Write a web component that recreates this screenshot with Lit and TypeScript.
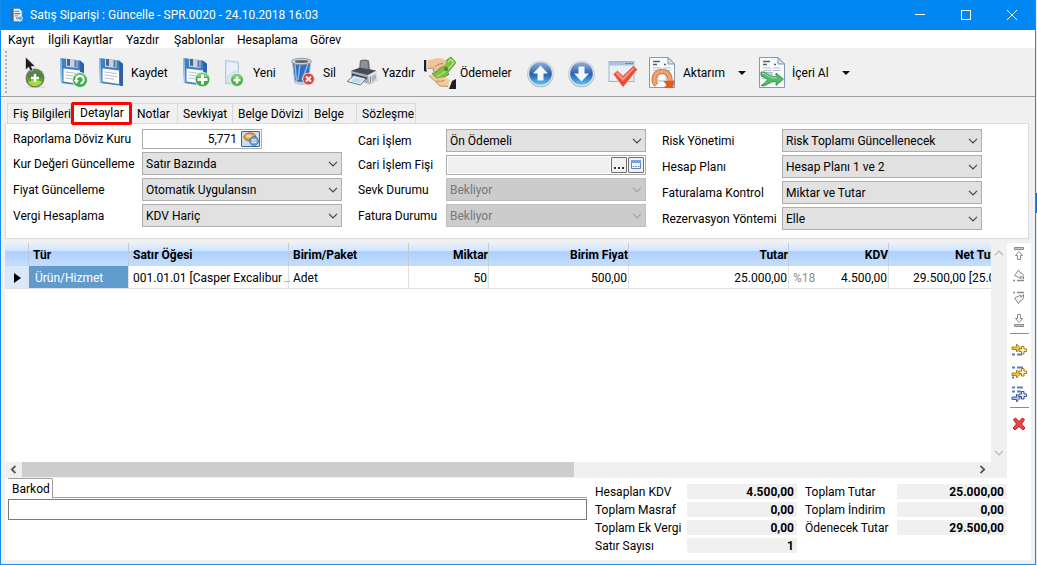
import { LitElement, html, css, svg, nothing } from "lit";
import { customElement, property } from "lit/decorators.js";
import { classMap } from "lit/directives/class-map.js";
import { styleMap } from "lit/directives/style-map.js";

/* ---------- icon parts ---------- */

const floppy = svg`
  <path d="M4 3 L24 5.500 L28 9 L28 31 L5 28 Z" fill="#3f7fc4"/>
  <path d="M4 3 L5.500 3.200 L6.500 28.200 L5 28 Z" fill="#9cc4ec"/>
  <path d="M24 5.500 L28 9 L28 31 L25 30.600 Z" fill="#2c62a4"/>
  <path d="M10 3.600 L21.500 5 L21.500 13 L10 11.800 Z" fill="#c3d2e4"/>
  <path d="M11 4 h3 v7 l-3 -.4 Z" fill="#4b6384"/>
  <path d="M18.500 5.200 h2 v7 l-2 -.2 Z" fill="#5d7699"/>
  <path d="M7.500 13.500 L24 15.500 L24 29 L7.500 26.600 Z" fill="#fdfdfe"/>
  <path d="M9.500 17 L22 18.600 M9.500 20 L22 21.600 M9.500 23 L19 24.300" stroke="#b8c2ce" stroke-width="1" fill="none"/>`;

const plusBadge = svg`
  <circle cx="23" cy="24" r="6.500" fill="#4fb04e" stroke="#e8f4e6" stroke-width="1"/>
  <path d="M17.500 22 a5.800 5.800 0 0 1 11 0 Z" fill="#8fd488" opacity=".7"/>
  <path d="M23 20.500 v7 M19.500 24 h7" stroke="#fff" stroke-width="2.400" fill="none"/>`;

const paper = svg`
  <path d="M3.500 1.500 H22 L28.500 8 V31.500 H3.500 Z" fill="#f8fafc" stroke="#8299b3"/>
  <path d="M22 1.500 V8 H28.500 Z" fill="#d3e0ee" stroke="#8299b3"/>
  <path d="M7 5.500 h7 M7 8.500 h4 M18 8.500 h2" stroke="#56616e" stroke-width="1.300"/>
  <path d="M7 12 h8 M17.500 12 h7 M7 14.500 h8 M17.500 14.500 h7" stroke="#b4bfcb" stroke-width="1"/>`;

const arrowDisc = (down: boolean) => svg`
  <defs>
    <linearGradient id="disc" x1="0" y1="0" x2="0" y2="1">
      <stop offset="0" stop-color="#8fb0dc"/><stop offset=".48" stop-color="#3565b0"/>
      <stop offset=".55" stop-color="#2a63b4"/><stop offset="1" stop-color="#5cc6ee"/>
    </linearGradient>
  </defs>
  <circle cx="15" cy="18" r="13.300" fill="#b6bdc6"/>
  <circle cx="15" cy="17.500" r="12.600" fill="#dde2e9"/>
  <circle cx="15" cy="17.500" r="11.300" fill="url(#disc)"/>
  <path d=${down
    ? "M15 25.500 L7.500 17.500 H12 V10.500 H18 V17.500 H22.500 Z"
    : "M15 9.500 L22.500 17.500 H18 V24.500 H12 V17.500 H7.500 Z"} fill="#f2f8fe"/>`;

const ICONS: Record<string, unknown> = {
  pointerAdd: svg`
    <ellipse cx="17" cy="31" rx="10" ry="1.200" fill="#d9d9d9"/>
    <circle cx="16" cy="22" r="9.500" fill="#6d7468"/>
    <circle cx="16" cy="22" r="8.400" fill="#5da526"/>
    <path d="M7.800 21 a8.300 8.300 0 0 1 16.400 0 Q16 24 7.800 21 Z" fill="#5c7f4c"/>
    <path d="M9 26 a8 8 0 0 0 14 0 Q16 22 9 26 Z" fill="#a5dc4a"/>
    <path d="M16 18 v8 M12 22 h8" stroke="#fff" stroke-width="2.400"/>
    <path d="M6.500 1 V14 L9.500 11.200 L11.700 15.200 L14 14.200 L12.200 10.500 L16.200 10.300 Z" fill="#1d1d1f" stroke="#f4f4f4" stroke-width=".6"/>`,
  saveRefresh: svg`<g transform="translate(-1 -1)">${floppy}
    <circle cx="24" cy="25" r="7.500" fill="#3fae55" stroke="#e3f4e5"/>
    <path d="M18.500 22 a6.500 6.500 0 0 1 11.500 0 Z" fill="#90d69a" opacity=".7"/>
    <path d="M20.500 26.500 a3.800 3.800 0 1 1 4 2" stroke="#fff" stroke-width="2" fill="none"/>
    <path d="M18 25 l5 0 l-2.500 4 Z" fill="#fff"/></g>`,
  save: svg`<g transform="translate(0 -1)">${floppy}</g>`,
  saveAdd: svg`<g transform="translate(0 -1)">${floppy}
    <circle cx="23.500" cy="24.500" r="7.300" fill="#45a648" stroke="#d9efd9"/>
    <path d="M17.500 22 a6.500 6.500 0 0 1 12 0 Z" fill="#97d794" opacity=".8"/>
    <path d="M23.500 19.500 v10 M18.500 24.500 h10" stroke="#f4fbf3" stroke-width="3"/></g>`,
  pageAdd: svg`
    <path d="M8.500 4.500 L21.500 6 V28.500 L8.500 27.500 Z" fill="#d5e3f1" stroke="#b4c9dd"/>
    <path d="M10 6.500 L20 7.600 V14 Q14 15 10 20 Z" fill="#e9f1f8"/>
    <g transform="translate(-3 0)">${plusBadge}</g>`,
  trash: svg`
    <path d="M5.500 6 H23.500 L21.500 27 Q14.500 29.500 8 27 Z" fill="#2f6fc0" stroke="#a5aeb9"/>
    <path d="M8 8 L9.500 25 M13 8 L11 24 M21 8 L15 24" stroke="#8cc0f3" stroke-width="1.400"/>
    <ellipse cx="14.500" cy="5.500" rx="10" ry="3.200" fill="#d5d9de" stroke="#8d959f"/>
    <ellipse cx="14.500" cy="5.500" rx="7" ry="1.600" fill="#5f6974"/>
    <path d="M7 24 Q14 28 22 24 L21.500 27.500 Q14.500 30 8 27.500 Z" fill="#c7ccd3"/>
    <circle cx="21.500" cy="23" r="5.900" fill="#dc3f3a" stroke="#f5d7d5"/>
    <path d="M19 20.500 l5 5 M24 20.500 l-5 5" stroke="#fff" stroke-width="2"/>`,
  printer: svg`
    <path d="M13 13 L14 4.500 Q18 2.500 23 4.500 L24 14 Z" fill="#6a6f77"/>
    <path d="M15 5.500 Q18.500 4 21.500 5.500 L22 13 H14.500 Z" fill="#8c929b"/>
    <path d="M5 15 L14 11.500 L30 14.500 L31.500 24 L24 28.500 L5 22 Z" fill="#aab0b8"/>
    <path d="M5 15 L14 11.500 L30 14.500 L22 19 Z" fill="#474c54"/>
    <path d="M22 19 L30.500 14.800 L31.500 23.500 L23.500 28 Z" fill="#dde1e6"/>
    <path d="M24.500 20.500 v6 M27 19.500 v5.500 M29 18.500 v5" stroke="#7f8791" stroke-width="1"/>
    <path d="M6 18.500 L21 22.500" stroke="#2d3138" stroke-width="2"/>
    <path d="M1 25.500 L8 19.500 L20 22.500 L14.500 29 Z" fill="#e4f1f7" stroke="#6b7680"/>
    <path d="M4.500 25.300 L9 21.500 L17 23.300 L13.500 27.300 Z" fill="#b9e0ee"/>`,
  payments: svg`
    <path d="M0 4 H2.500 V16 L0 15 Z" fill="#1e1e22"/><path d="M2.500 4.500 h1.500 v8 l-1.500 1 Z" fill="#e8edf3"/>
    <path d="M20 6 L27 1 L32 6.500 L24 16.500 L25 18.500 Q18 23.500 12 22.500 L8 17.500 Q15 16.500 20 6 Z" fill="#7fc043" stroke="#558f2c" stroke-width=".8"/>
    <path d="M24 6 L27 3.500 L29.500 6.500 Q23 16 13 20.500" stroke="#bfe58c" stroke-width="1.300" fill="none"/>
    <circle cx="22" cy="13" r="2.200" fill="#4f8e28"/>
    <path d="M3.500 4.500 L13 2 Q18 1.500 22.500 5 L21 9.500 Q16 11 12 15.500 L9 15 L9.500 12 L3.500 12.500 Z" fill="#efc499"/>
    <path d="M3.500 12.500 L9.500 12 L9 15 L12 15.500 Q16 11 21 9.500 M11 10.500 Q14.500 7.500 19 7.500" stroke="#a8784c" stroke-width=".8" fill="none"/>
    <path d="M5 19.500 L7.500 19 L13 22.500 L18 21.500 Q23 21 26.500 24.500 L25 30.500 L16 30 Z" fill="#f2cba0"/>
    <path d="M5 19.500 L16 30 L25 30.500 M12 25 Q17 26 20.500 24.500" stroke="#a8784c" stroke-width=".8" fill="none"/>
    <path d="M26 23.500 L28.500 25 L26.500 31.500 L24 30.500 Z" fill="#edf0f4"/>
    <path d="M28 25 L32 23 V33 H25 Z" fill="#1e1e22"/>`,
  up: arrowDisc(false),
  down: arrowDisc(true),
  check: svg`
    <rect x="1.500" y="5.500" width="25" height="20" fill="#e9eff7" stroke="#9fb4d0"/>
    <rect x="2" y="6" width="24" height="3.500" fill="#a9c1e2"/>
    <path d="M18 7.500 h2 M21 7.500 h2 M24 7.500 h1.500" stroke="#4a6c9c"/>
    <path d="M5.500 18 L10 14.500 L15.500 19.500 L26 9.500 L30 13.500 L15.500 31.500 Z" fill="#ea4a37" stroke="#fbd6cf" stroke-width=".8"/>
    <path d="M8 17.500 L10.200 16 L15.500 21.500 L26 11.500 L27 12.500 L15.500 25 Z" fill="#f79684"/>`,
  transfer: svg`<g transform="translate(-1 0)">${paper}
    <rect x="12" y="18" width="8" height="7" fill="#fff" stroke="#a9b5c4"/>
    <path d="M10.500 29 A8 8 0 1 1 24 22.500 V27" stroke="#c4703a" stroke-width="5" fill="none"/>
    <path d="M10.500 29 A8 8 0 1 1 24 22.500 V27" stroke="#f2a26b" stroke-width="3.400" fill="none"/>
    <path d="M17.500 25 L28.500 24.500 L27 32 L17.500 32 L20.500 29 Z" fill="#e85a1e"/></g>`,
  importDoc: svg`${paper}
    <rect x="7" y="16.500" width="9" height="6" fill="#c9d9ec" stroke="#a6b9d0"/>
    <path d="M5 16 Q8 15 12 18.500 Q15 21 20 21 V17 L27.500 23 L20 29.500 V25.500 Q15 25.500 12 28 Q8 31 5 29.500 Q10 27 11.500 23.500 Q9 21 5 20 Z" fill="#55b96a" stroke="#2d8c48" stroke-width=".8"/>
    <path d="M6 17.200 Q9 17 12 20 Q16 22.500 21 22" stroke="#a9e2b2" fill="none"/>`,
};

const SIDE_ICONS: Record<string, unknown> = {
  top: svg`<path d="M3.500 1.500 h9 v2 h-9 Z" fill="#c9c9c9" stroke="#8a8a8a"/>
    <path d="M8 5.500 L11.500 9.500 H9.500 V13.500 H6.500 V9.500 H4.500 Z" fill="#fff" stroke="#8a8a8a"/>`,
  up: svg`<path d="M2 12.500 h2 M6 12.500 h7" stroke="#8a8a8a" stroke-width="1.600"/>
    <path d="M3.500 7.500 L7.500 2 L9 4.500 Q13 5 12.500 11 Q11 8.500 9.500 8.500 L10 10.500 L3.500 7.500 Z" fill="#f4f4f4" stroke="#8a8a8a"/>`,
  down: svg`<path d="M2 2.500 h2 M6 2.500 h7" stroke="#8a8a8a" stroke-width="1.600"/>
    <path d="M3.500 8 L7.500 13.500 L9 11 Q13 10.500 12.500 4.500 Q11 7 9.500 7 L10 5 L3.500 8 Z" fill="#f4f4f4" stroke="#8a8a8a"/>`,
  bottom: svg`<path d="M3.500 12.500 h9 v2 h-9 Z" fill="#c9c9c9" stroke="#8a8a8a"/>
    <path d="M8 10.500 L11.500 6.500 H9.500 V2.500 H6.500 V6.500 H4.500 Z" fill="#fff" stroke="#8a8a8a"/>`,
  addTop: svg`<path d="M1 12.500 h3 M6 12.500 h5" stroke="#5b7fb8" stroke-width="1.800"/>
    <path d="M1 5 H5.500 V2 L9.500 6 L5.500 10 V7.500 H1 Z" fill="#f5c542" stroke="#a87912" stroke-width=".9"/>
    <path d="M10.500 4.500 h2.500 v2.500 h2.500 v2.500 h-2.500 v2.500 h-2.500 v-2.500 h-2.500 v-2.500 h2.500 Z" fill="#fff2c0" stroke="#a87912"/>`,
  addMid: svg`<path d="M1 3.500 h3 M6 3.500 h6 M1 13.500 h2" stroke="#5b7fb8" stroke-width="1.800"/>
    <path d="M1 9 H5.500 V6 L9.500 10 L5.500 14 V11.500 H1 Z" fill="#f5c542" stroke="#a87912" stroke-width=".9"/>
    <path d="M10.500 4.500 h2.500 v2.500 h2.500 v2.500 h-2.500 v2.500 h-2.500 v-2.500 h-2.500 v-2.500 h2.500 Z" fill="#fff2c0" stroke="#a87912"/>`,
  addEnd: svg`<path d="M1 1.500 h3 M6 1.500 h6 M1 5.500 h3 M6 5.500 h4" stroke="#5b7fb8" stroke-width="1.800"/>
    <path d="M1 11 H5.500 V8 L9.500 12 L5.500 16 V13.500 H1 Z" fill="#a9bfe6" stroke="#34508c" stroke-width=".9"/>
    <path d="M10.500 5.500 h2.500 v2.500 h2.500 v2.500 h-2.500 v2.500 h-2.500 v-2.500 h-2.500 v-2.500 h2.500 Z" fill="#dfe8f8" stroke="#34508c"/>`,
  remove: svg`<path d="M2.500 3.500 L4.500 2 L8 5.500 L11.500 2 L13.500 3.500 L10.500 8 L14 12 L12 14 L8 10.500 L4 14 L2 12 L5.500 8 Z" fill="#e5484a" stroke="#b91d24"/>`,
};

const chevron = html`<svg class="chev" viewBox="0 0 10 6" width="10" height="6" aria-hidden="true">
  <path d="M1 .8 L5 4.800 L9 .8" fill="none" stroke="currentColor" stroke-width="1.200"/></svg>`;

/* ---------- labelled drop-down ---------- */

@customElement("combo-field")
export class ComboField extends LitElement {
  @property() label = "";
  @property() value = "";
  @property({ type: Boolean }) off = false;

  static styles = css`
    :host { display: grid; grid-template-columns: var(--label, 120px) 200px; align-items: center; height: 23px; }
    label { white-space: nowrap; }
    .box { display: grid; align-items: center; height: 23px; color: #444; }
    .box > * { grid-area: 1 / 1; }
    select {
      appearance: none; box-sizing: border-box; width: 100%; height: 23px; margin: 0; padding: 0 20px 0 3px;
      border: 1px solid #adadad; border-radius: 0; background: #e1e1e1; color: #000; font: inherit; outline: 0;
    }
    select:disabled { background: #ccc; border-color: #bfbfbf; color: #787878; opacity: 1; }
    .box.off { color: #a2a2a2; }
    .chev { justify-self: end; margin-right: 4px; pointer-events: none; }
  `;

  render() {
    return html`<label for="s">${this.label}</label>
      <div class=${classMap({ box: true, off: this.off })}>
        <select id="s" ?disabled=${this.off}><option>${this.value}</option></select>${chevron}
      </div>`;
  }
}

/* ---------- main window ---------- */

interface Tool { icon: string; name: string; label?: string; width?: number; menu?: boolean; solo?: boolean }

const TOOLS: Tool[] = [
  { icon: "pointerAdd", name: "Seç" },
  { icon: "saveRefresh", name: "Kaydet ve yenile" },
  { icon: "save", name: "Kaydet", label: "Kaydet", width: 42 },
  { icon: "saveAdd", name: "Kaydet ve yeni" },
  { icon: "pageAdd", name: "Yeni", label: "Yeni", width: 28 },
  { icon: "trash", name: "Sil", label: "Sil", width: 17 },
  { icon: "printer", name: "Yazdır", label: "Yazdır", width: 36 },
  { icon: "payments", name: "Ödemeler", label: "Ödemeler", width: 58 },
  { icon: "up", name: "Önceki", solo: true },
  { icon: "down", name: "Sonraki", solo: true },
  { icon: "check", name: "Onayla", solo: true },
  { icon: "transfer", name: "Aktarım", label: "Aktarım", width: 67, menu: true },
  { icon: "importDoc", name: "İçeri Al", label: "İçeri Al", width: 62, menu: true },
];

const MENUS = [["Kayıt", 40], ["İlgili Kayıtlar", 78], ["Yazdır", 48], ["Şablonlar", 63], ["Hesaplama", 73], ["Görev", 45]] as const;

const TABS = [["Fiş Bilgileri", 64], ["Detaylar", 61], ["Notlar", 46], ["Sevkiyat", 55], ["Belge Dövizi", 76], ["Belge", 48], ["Sözleşme", 59]] as const;

const COLUMNS = [
  { name: "", width: 24, kind: "" },
  { name: "Tür", width: 100, kind: "" },
  { name: "Satır Öğesi", width: 160, kind: "" },
  { name: "Birim/Paket", width: 120, kind: "" },
  { name: "Miktar", width: 80, kind: "num" },
  { name: "Birim Fiyat", width: 140, kind: "num" },
  { name: "Tutar", width: 160, kind: "num" },
  { name: "KDV", width: 100, kind: "num" },
  { name: "Net Tutar", width: 160, kind: "net" },
];

@customElement("app-root")
export class AppRoot extends LitElement {
  static styles = css`
    :host {
      display: block; height: 100vh; box-sizing: border-box; padding-right: 1px;
      background: linear-gradient(#e9eef3 0 193px, #0a6fd0 193px 213px, #dfe6ee 213px);
      font: 12px/16px Roboto, "Noto Sans", sans-serif; color: #000;
    }
    button { font: inherit; color: inherit; border: 0; padding: 0; background: none; }
    svg { display: block; }
    .window {
      box-sizing: border-box; height: 100%; display: flex; flex-direction: column; overflow: hidden;
      border: 1px solid #1a8ceb; border-top: 0; background: #f0f0f0;
    }
    .title { flex: none; display: flex; align-items: center; height: 30px; background: #0087f2; color: #fff; }
    .title .app { margin: 0 6px 0 8px; }
    .title h1 { flex: 1; margin: 0; font-size: 12px; font-weight: 400; white-space: nowrap; }
    .title button { width: 46px; height: 30px; display: grid; place-items: center; }
    .menu { flex: none; display: flex; height: 18px; padding-left: 7px; background: #fff; }
    .menu button { text-align: left; white-space: nowrap; line-height: 18px; padding-top: 1px; }
    .tools {
      flex: none; display: flex; align-items: center; gap: 6px; height: 48px; padding-left: 4px;
      border-bottom: 1px solid #a0a0a0;
    }
    .grip {
      width: 2px; height: 42px; margin-right: 6px;
      background: repeating-linear-gradient(#b0b0b0 0 2px, transparent 2px 4px);
    }
    .tool { display: flex; align-items: center; gap: 4px; height: 40px; padding-top: 2px; white-space: nowrap; text-align: left; }
    .tool.solo svg { width: 35px; }
    .lab { display: flex; align-items: center; justify-content: space-between; }
    .caret { border: 4px solid transparent; border-top-color: #111; border-bottom: 0; margin-right: 4px; }

    .content { flex: 1; min-height: 0; display: flex; flex-direction: column; padding: 5px 4px 4px 4px; }
    .tabs { flex: none; display: flex; align-items: flex-end; padding-left: 2px; height: 21px; }
    .tabs button {
      box-sizing: border-box; height: 20px; border: 1px solid #d9d9d9; border-width: 1px 1px 0 0;
      white-space: nowrap; text-align: left; padding-left: 5px;
    }
    .tabs button:first-child { border-left-width: 1px; }
    .tabs .on {
      position: relative; height: 23px; margin: 0 0 -2px; padding-left: 6px; border: 3px solid #f00;
      border-radius: 2px; background: #fff; line-height: 15px;
    }
    .panel {
      flex: none; display: flex; gap: 16px; margin-right: 2px; padding: 5px 7px 8px; border: 1px solid #dcdcdc; background: #fff;
    }
    .col { display: flex; flex-direction: column; gap: 3px; }
    .c1 { --label: 129px; } .c2 { --label: 88px; } .c3 { --label: 120px; }
    .line { display: grid; grid-template-columns: var(--label) 200px; align-items: center; height: 20px; }
    .line label { white-space: nowrap; }
    .entry {
      box-sizing: border-box; display: flex; align-items: center; height: 20px; padding: 1px; gap: 1px;
      border: 1px solid #ababab; background: #fff;
    }
    .entry.short { width: 120px; }
    .entry input { flex: 1; min-width: 0; height: 16px; box-sizing: border-box; border: 0; padding: 0 3px; background: none; font: inherit; outline: 0; }
    .entry .right { text-align: right; }
    .entry .grey { background: #f0f0f0; }
    .mini { box-sizing: border-box; width: 16px; height: 16px; border: 1px solid #6e6e6e; background: #f2f2f2; display: grid; place-items: center; border-radius: 1px; line-height: 10px; }
    .mini.rate { width: 19px; background: #c9def5; border-color: #33649c; }

    .mid { flex: 1; min-height: 0; display: grid; grid-template-columns: 1fr 16px 24px; margin-top: 4px; background: #fff; }
    .grid { overflow: hidden; min-width: 0; }
    table { table-layout: fixed; border-collapse: separate; border-spacing: 0; width: 1044px; }
    th, td { box-sizing: border-box; height: 23px; padding: 1px 0 0 4px; vertical-align: middle; white-space: nowrap; text-align: left; border-right: 1px solid #d6d6d6; border-bottom: 1px solid #d6d6d6; }
    th { font-weight: 700; border-right-color: #c3cad3; background: linear-gradient(#e6f0fe 0, #cfe4fe 8px, #abd0fd 8px, #c3ddfe 100%); }
    td { border-color: #e0e0e0; }
    .num { text-align: right; }
    td.num { padding-right: 1px; }
    th.net { padding-left: 66px; }
    td.net { padding-left: 24px; }
    .dots { font-size: 8px; line-height: 8px; }
    td.mark { background: #d9e8fb; padding-left: 9px; }
    .mark i { display: block; width: 0; border: 5px solid transparent; border-left: 7px solid #000; border-right: 0; }
    td.sel { background: #619bcb; color: #fff; padding-left: 6px; }
    .kdv { display: flex; justify-content: space-between; }
    .kdv span { color: #8e8e8e; }
    .vbar { display: flex; flex-direction: column; justify-content: space-between; align-items: center; padding: 7px 0 6px; background: #f0f0f0; color: #b4b4b4; }
    .flip { transform: rotate(180deg); }
    .side { display: flex; flex-direction: column; align-items: center; gap: 6px; padding-top: 3px; }
    .side hr { width: 19px; margin: -1px 0 2px; border: 0; border-top: 1px solid #8c8c8c; }
    .hbar { flex: none; display: flex; align-items: center; height: 15px; background: #f0f0f0; color: #555; border-bottom: 1px solid #f0f0f0; }
    .hbar svg { margin: 0 5px; }
    .track { flex: 1; height: 15px; }
    .thumb { width: 58%; height: 15px; background: #cdcdcd; }
    .under { display: flex; flex: none; background: #fff; }
    .under .hbar { flex: 1; margin-right: 24px; }
    .foot { flex: none; display: flex; gap: 8px; height: 82px; padding-left: 3px; background: #fff; box-sizing: border-box; }
    .code { flex: 1; min-width: 0; display: flex; flex-direction: column; }
    .code .strip { display: flex; height: 20px; }
    .code label { box-sizing: border-box; width: 45px; padding: 2px 0 0 4px; border: 1px solid #a0a0a0; border-width: 1px 1px 0 0; border-top-right-radius: 2px; }
    .code .rule { flex: 1; border-bottom: 1px solid #a0a0a0; }
    .code input { box-sizing: border-box; width: 100%; height: 21px; margin-top: 1px; border: 1px solid #7a7a7a; padding: 0 3px; font: inherit; outline: 0; }
    .sums { display: grid; grid-template-columns: 92px 110px 100px 110px; grid-auto-rows: 15px; row-gap: 3px; margin: 0; padding: 6px 24px 0 0; white-space: nowrap; line-height: 17px; }
    .sums dt.second { padding-left: 8px; }
    .sums dd { margin: 0; padding-right: 3px; background: #f0f0f0; font-weight: 700; text-align: right; }
  `;

  private tool(t: Tool) {
    return html`<button class=${classMap({ tool: true, solo: !!t.solo })} aria-label=${t.name}>
      <svg viewBox="0 0 32 34" width="32" height="34" aria-hidden="true">${ICONS[t.icon]}</svg>
      ${t.label
        ? html`<span class="lab" style=${styleMap({ width: `${t.width}px` })}>${t.label}${t.menu ? html`<span class="caret"></span>` : nothing}</span>`
        : nothing}
    </button>`;
  }

  private side(key: string, name: string) {
    return html`<button aria-label=${name}><svg viewBox="0 0 16 16" width="16" height="16" aria-hidden="true">${SIDE_ICONS[key]}</svg></button>`;
  }

  render() {
    return html`<div class="window">
      <header class="title">
        <svg class="app" viewBox="0 0 16 16" width="15" height="16" aria-hidden="true">
          <path d="M3 1 H11 L14 4 V15 H3 Z" fill="#eef4fb" stroke="#6c7f94" stroke-width=".8"/>
          <path d="M2 1 h3 v14 h-3 Z" fill="#3e6b96"/>
          <path d="M6 4 h5 M6 6.500 h6 M6 9 h4" stroke="#4b78a5" stroke-width="1.200"/>
          <path d="M7 10 h4 v-2 l4 3.500 l-4 3.500 v-2 h-4 Z" fill="#63a8e2" stroke="#fff" stroke-width=".6"/>
        </svg>
        <h1>Satış Siparişi : Güncelle - SPR.0020 - 24.10.2018 16:03</h1>
        <button aria-label="Simge durumuna küçült"><svg width="10" height="10"><path d="M0 4.500 h10" stroke="#fff"/></svg></button>
        <button aria-label="Ekranı kapla"><svg width="10" height="10"><path d="M.5 .5 h9 v9 h-9 Z" fill="none" stroke="#fff"/></svg></button>
        <button aria-label="Kapat"><svg width="10" height="10"><path d="M0 0 L10 10 M10 0 L0 10" stroke="#fff"/></svg></button>
      </header>
      <nav class="menu">${MENUS.map(([m, w]) => html`<button style=${styleMap({ width: `${w}px` })}>${m}</button>`)}</nav>
      <div class="tools"><span class="grip"></span>${TOOLS.map((t) => this.tool(t))}</div>

      <main class="content">
        <div class="tabs">
          ${TABS.map(([t, w], i) => html`<button class=${classMap({ on: i === 1 })} style=${styleMap({ width: `${w}px` })}>${t}</button>`)}
        </div>
        <section class="panel">
          <div class="col c1">
            <div class="line"><label for="rate">Raporlama Döviz Kuru</label>
              <div class="entry short"><input id="rate" class="right" value="5,771">
                <button class="mini rate" aria-label="Kur seç"><svg viewBox="0 0 16 14" width="16" height="14">
                  <ellipse cx="7" cy="5" rx="6" ry="4" fill="#e0a243" stroke="#9c6418"/>
                  <ellipse cx="6" cy="4" rx="3.500" ry="1.800" fill="#f6d08a"/>
                  <circle cx="11" cy="9" r="4.300" fill="#7fa9de" stroke="#3c6cab"/>
                  <path d="M8.500 8 h5 M8.500 10.200 h5" stroke="#fff"/></svg></button></div></div>
            <combo-field label="Kur Değeri Güncelleme" value="Satır Bazında"></combo-field>
            <combo-field label="Fiyat Güncelleme" value="Otomatik Uygulansın"></combo-field>
            <combo-field label="Vergi Hesaplama" value="KDV Hariç"></combo-field>
          </div>
          <div class="col c2">
            <combo-field label="Cari İşlem" value="Ön Ödemeli"></combo-field>
            <div class="line"><label for="slip">Cari İşlem Fişi</label>
              <div class="entry"><input id="slip" class="grey">
                <button class="mini" aria-label="Gözat"><svg viewBox="0 0 12 12" width="12" height="12"><path d="M1 9 h2 M5 9 h2 M9 9 h2" stroke="#333" stroke-width="1.800"/></svg></button>
                <button class="mini" aria-label="Fişi aç"><svg viewBox="0 0 12 12" width="12" height="12">
                  <path d="M1.500 1.500 h9 v8 h-9 Z" fill="#eef4fc" stroke="#5d87c4"/><path d="M1 1 h10 v3 h-10 Z" fill="#7aa3dc"/>
                  <path d="M3 7.500 h1.500 M5.500 7.500 h1.500 M8 7.500 h1.500" stroke="#6d7f97"/></svg></button></div></div>
            <combo-field label="Sevk Durumu" value="Bekliyor" off></combo-field>
            <combo-field label="Fatura Durumu" value="Bekliyor" off></combo-field>
          </div>
          <div class="col c3">
            <combo-field label="Risk Yönetimi" value="Risk Toplamı Güncellenecek"></combo-field>
            <combo-field label="Hesap Planı" value="Hesap Planı 1 ve 2"></combo-field>
            <combo-field label="Faturalama Kontrol" value="Miktar ve Tutar"></combo-field>
            <combo-field label="Rezervasyon Yöntemi" value="Elle"></combo-field>
          </div>
        </section>

        <section class="mid">
          <div class="grid">
            <table>
              <colgroup>${COLUMNS.map((c) => html`<col style=${styleMap({ width: `${c.width}px` })}>`)}</colgroup>
              <thead><tr>${COLUMNS.map((c) => html`<th class=${c.kind}>${c.name}</th>`)}</tr></thead>
              <tbody><tr>
                <td class="mark"><i></i></td><td class="sel">Ürün/Hizmet</td><td>001.01.01 [Casper Excalibur<span class="dots"> ...</span></td><td>Adet</td>
                <td class="num">50</td><td class="num">500,00</td><td class="num">25.000,00</td>
                <td class="num"><div class="kdv"><span>%18</span>4.500,00</div></td><td class="net">29.500,00 [25.000,00]</td>
              </tr></tbody>
            </table>
          </div>
          <div class="vbar"><span class="flip">${chevron}</span>${chevron}</div>
          <div class="side">
            ${this.side("top", "En üste taşı")}${this.side("up", "Yukarı taşı")}${this.side("down", "Aşağı taşı")}${this.side("bottom", "En alta taşı")}
            <hr>
            ${this.side("addTop", "Üste ekle")}${this.side("addMid", "Araya ekle")}${this.side("addEnd", "Sona ekle")}
            <hr>
            ${this.side("remove", "Satırı sil")}
          </div>
        </section>
        <div class="under"><div class="hbar">
          <svg width="7" height="9" viewBox="0 0 7 9"><path d="M5.500 .8 L1.800 4.500 L5.500 8.200" fill="none" stroke="currentColor" stroke-width="1.800"/></svg>
          <div class="track"><div class="thumb"></div></div>
          <svg width="7" height="9" viewBox="0 0 7 9"><path d="M1.500 .8 L5.200 4.500 L1.500 8.200" fill="none" stroke="currentColor" stroke-width="1.800"/></svg>
          <svg width="6" height="9"></svg>
        </div></div>
        <footer class="foot">
          <div class="code">
            <div class="strip"><label for="barcode">Barkod</label><span class="rule"></span></div>
            <input id="barcode">
          </div>
          <dl class="sums">
            <dt>Hesaplan KDV</dt><dd>4.500,00</dd><dt class="second">Toplam Tutar</dt><dd>25.000,00</dd>
            <dt>Toplam Masraf</dt><dd>0,00</dd><dt class="second">Toplam İndirim</dt><dd>0,00</dd>
            <dt>Toplam Ek Vergi</dt><dd>0,00</dd><dt class="second">Ödenecek Tutar</dt><dd>29.500,00</dd>
            <dt>Satır Sayısı</dt><dd>1</dd>
          </dl>
        </footer>
      </main>
    </div>`;
  }
}
